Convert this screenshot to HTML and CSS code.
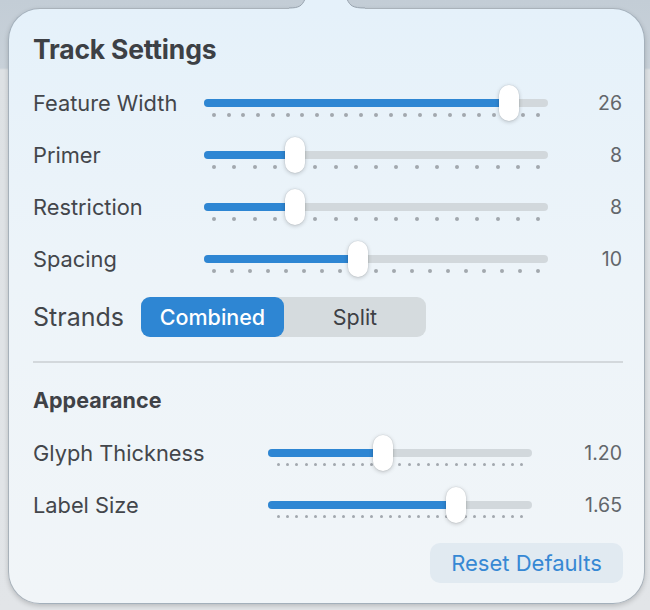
FILE: index.html
```html
<!DOCTYPE html>
<html lang="en">
<head>
    <meta charset="UTF-8">
    <meta name="viewport" content="width=device-width, initial-scale=1.0">
    <title>Track Settings</title>

    <link rel="stylesheet" href="styles.css">

</head>
<body>
    <div class="popover">
        <svg class="arrow" width="76" height="11" viewBox="0 0 76 11">
            <path d="M0,11 L0,9 C10,9 13,7 16,0 L58,0 C61,7 64,9 76,9 L76,11 Z" fill="#e5f1fa"/>
            <path d="M0,9 C10,9 13,7 16,0 M58,0 C61,7 64,9 76,9" fill="none" stroke="#97a2ad" stroke-width="1"/>
        </svg>

        <h1 class="title">Track Settings</h1>

        <div class="group">
            <div class="row">
                <span class="label">Feature Width</span>
                <div class="slider" data-ticks="23" data-fill="305">
                    <div class="track"><div class="fill"></div></div>
                    <div class="ticks"></div>
                    <div class="thumb"></div>
                </div>
                <span class="value">26</span>
            </div>
            <div class="row">
                <span class="label">Primer</span>
                <div class="slider" data-ticks="17" data-fill="91">
                    <div class="track"><div class="fill"></div></div>
                    <div class="ticks"></div>
                    <div class="thumb"></div>
                </div>
                <span class="value">8</span>
            </div>
            <div class="row">
                <span class="label">Restriction</span>
                <div class="slider" data-ticks="17" data-fill="91">
                    <div class="track"><div class="fill"></div></div>
                    <div class="ticks"></div>
                    <div class="thumb"></div>
                </div>
                <span class="value">8</span>
            </div>
            <div class="row">
                <span class="label">Spacing</span>
                <div class="slider" data-ticks="19" data-fill="154">
                    <div class="track"><div class="fill"></div></div>
                    <div class="ticks"></div>
                    <div class="thumb"></div>
                </div>
                <span class="value">10</span>
            </div>
        </div>

        <div class="strands">
            <span class="strands-label">Strands</span>
            <div class="segmented">
                <span class="segment active">Combined</span>
                <span class="segment">Split</span>
            </div>
        </div>

        <hr class="divider">

        <h2 class="section">Appearance</h2>

        <div class="group appearance">
            <div class="row">
                <span class="label">Glyph Thickness</span>
                <div class="slider fine" data-ticks="27" data-fill="115">
                    <div class="track"><div class="fill"></div></div>
                    <div class="ticks"></div>
                    <div class="thumb"></div>
                </div>
                <span class="value">1.20</span>
            </div>
            <div class="row">
                <span class="label">Label Size</span>
                <div class="slider fine" data-ticks="27" data-fill="188">
                    <div class="track"><div class="fill"></div></div>
                    <div class="ticks"></div>
                    <div class="thumb"></div>
                </div>
                <span class="value">1.65</span>
            </div>
        </div>

        <div class="footer">
            <button class="reset">Reset Defaults</button>
        </div>
    </div>

<script>
document.querySelectorAll(".slider").forEach(function (slider) {
    const count = parseInt(slider.dataset.ticks, 10);
    const fill = parseInt(slider.dataset.fill, 10);
    const ticks = slider.querySelector(".ticks");

    for (let i = 0; i < count; i++) {
        const dot = document.createElement("span");
        dot.className = "dot";
        ticks.appendChild(dot);
    }

    // thumb sits on the end of the blue fill
    slider.querySelector(".fill").style.width = fill + "px";
    slider.querySelector(".thumb").style.left = (fill - 10) + "px";
});
</script>

</body>
</html>
```

FILE: styles.css
```css
* {
    box-sizing: border-box;
}

body {
    margin: 0;
    height: 610px;
    overflow: hidden;
    background: linear-gradient(to bottom, #c3cdd6 0, #c8d1d9 68px, #dde1e4 70px, #e2e5e8 100%);
    font-family: Inter, "Noto Sans", sans-serif;
    color: #414449;
}

.popover {
    position: relative;
    width: 637px;
    height: 596px;
    margin: 8px 0 0 8px;
    padding: 26px 21px 0 24px;
    border: 1px solid rgba(110, 122, 134, 0.55);
    border-radius: 32px;
    background: linear-gradient(to bottom, #e5f1fa 0%, #edf4f9 45%, #f1f5f8 100%);
    box-shadow: 0 2px 5px rgba(0, 0, 0, 0.18);
}

.arrow {
    position: absolute;
    top: -10px;
    left: 280px;
}

.title {
    margin: 0 0 14px;
    font-size: 26.5px;
    line-height: 28px;
    font-weight: 700;
    letter-spacing: -0.2px;
    color: #3d4045;
}

.row {
    display: grid;
    grid-template-columns: 171px 344px 1fr;
    align-items: center;
    height: 52px;
}

.appearance .row {
    grid-template-columns: 235px 264px 1fr;
}

.label {
    font-size: 21.8px;
    line-height: 26px;
    padding-bottom: 1px;
    color: #43464b;
}

.value {
    justify-self: end;
    padding-right: 1px;
    font-size: 19.5px;
    color: #62666b;
}

.slider {
    position: relative;
    height: 36px;
    padding-top: 14px;
}

.track {
    height: 8px;
    border-radius: 4px;
    background: #d2d8dc;
    overflow: hidden;
}

.fill {
    height: 100%;
    background: #2e86d3;
}

.ticks {
    display: flex;
    justify-content: space-between;
    margin: 6px 8px 0;
}

.dot {
    width: 4px;
    height: 4px;
    border-radius: 50%;
    background: #a2a8ae;
}

.fine .ticks {
    margin: 6px 8.5px 0;
}

.fine .dot {
    width: 3px;
    height: 3px;
}

.thumb {
    position: absolute;
    top: 0;
    width: 20px;
    height: 36px;
    border-radius: 10px;
    background: #ffffff;
    box-shadow: 0 1px 4px rgba(0, 0, 0, 0.22), 0 0 0 0.5px rgba(0, 0, 0, 0.06);
}

.strands {
    display: flex;
    align-items: center;
    gap: 17px;
    height: 52px;
    margin-top: 6px;
}

.strands-label {
    font-size: 25px;
    color: #43464b;
}

.segmented {
    display: flex;
    width: 285px;
    height: 40px;
    border-radius: 9px;
    background: #d5dbde;
}

.segment {
    display: flex;
    align-items: center;
    justify-content: center;
    width: 143px;
    font-size: 21.5px;
    color: #3d4045;
    border-radius: 9px;
}

.segment.active {
    background: #2e86d3;
    color: #ffffff;
    font-weight: 500;
}

.segment + .segment {
    flex: 1;
}

.divider {
    height: 2px;
    margin: 18px 0 0;
    border: 0;
    background: #d3d8dc;
}

.section {
    margin: 23px 0 13px;
    font-size: 21.5px;
    line-height: 28px;
    font-weight: 700;
    color: #3f4247;
}

.footer {
    display: flex;
    justify-content: flex-end;
    margin-top: 12px;
}

.reset {
    width: 193px;
    height: 40px;
    border: 0;
    border-radius: 10px;
    background: #e1eaf1;
    font-family: inherit;
    font-size: 22px;
    color: #3688d4;
}
```
